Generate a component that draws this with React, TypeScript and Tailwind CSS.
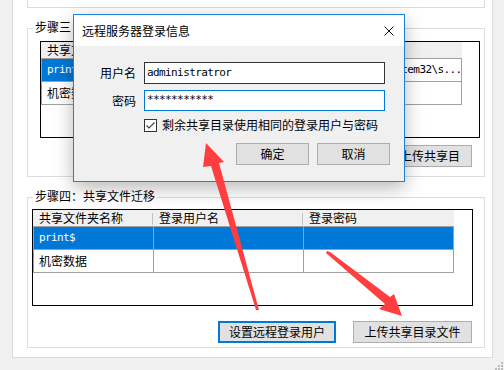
const cjk = "font-['Noto_Sans_CJK_SC','Noto_Sans',sans-serif]";
const mono = "font-['DejaVu_Sans_Mono','Liberation_Mono',monospace] text-[11px] tracking-[-0.6px]";

type Cell = { text: string; mono?: boolean; selected?: boolean };

function GroupBox({ title, className, children }: { title: string; className: string; children: React.ReactNode }) {
  return (
    <div className={`relative w-[458px] border border-[#dcdcdc] ${className}`}>
      <span className="absolute -top-[10px] left-[5px] bg-white px-[2px] text-[12px] leading-[16px]">{title}</span>
      {children}
    </div>
  );
}

function ListView({ header, rows, width }: { header: string[]; rows: Cell[][]; width: string }) {
  const widths = ['w-[120px]', 'w-[150px]', 'w-[150px]'];
  return (
    <div className={`${width} h-[97px] border border-black bg-white`}>
      <div className="flex h-[17px] w-[421px] border-b border-[#a0a0a0] bg-[#f0f0f0]">
        {header.map((h, i) => (
          <div key={i} className={`${widths[i]} relative flex items-center pl-[6px] text-[12px] leading-[16px]`}>
            {h}
            {i < 2 && <span className="absolute right-0 top-[3px] h-[12px] w-px bg-[#c4c4c4]" />}
          </div>
        ))}
      </div>
      {rows.map((row, r) => (
        <div key={r} className="flex h-[23px] w-[421px] border-b border-l border-[#a0a0a0]">
          {row.map((c, i) => (
            <div
              key={i}
              className={`${widths[i]} flex items-center overflow-hidden whitespace-nowrap border-r border-[#a0a0a0] pl-[5px] ${
                c.selected ? 'bg-[#0078d7] text-white' : ''
              } ${c.mono ? mono : 'text-[12px]'}`}
            >
              {c.text}
            </div>
          ))}
        </div>
      ))}
    </div>
  );
}

function Button({ children, focused, className = '' }: { children: React.ReactNode; focused?: boolean; className?: string }) {
  return (
    <div
      className={`flex h-[22px] items-center justify-center bg-[#e1e1e1] text-[12px] ${
        focused ? 'border-2 border-[#0078d7]' : 'border border-[#adadad]'
      } ${className}`}
    >
      {children}
    </div>
  );
}

function LoginDialog() {
  return (
    <div className="absolute left-[73px] top-[14px] flex h-[168px] w-[332px] flex-col border border-[#1883d7] bg-[#f0f0f0] shadow-[0_6px_18px_rgba(0,0,0,0.28)]">
      <div className="flex h-[31px] items-center justify-between bg-white pl-[8px] pr-[10px]">
        <span className="text-[12px]">远程服务器登录信息</span>
        <svg width="10" height="10" viewBox="0 0 10 10">
          <path d="M0.5 0.5 L9.5 9.5 M9.5 0.5 L0.5 9.5" stroke="#111" strokeWidth="1" />
        </svg>
      </div>
      <div className="flex flex-col pt-[16px]">
        <div className="flex items-center">
          <span className="w-[62px] text-right text-[12px]">用户名</span>
          <div className={`ml-[8px] flex h-[22px] w-[241px] items-center border border-[#333] bg-white pl-[2px] ${mono}`}>
            administratror
          </div>
        </div>
        <div className="mt-[6px] flex items-center">
          <span className="w-[62px] text-right text-[12px]">密码</span>
          <div className={`ml-[8px] flex h-[21px] w-[241px] items-center border border-[#0078d7] bg-white pl-[2px] ${mono}`}>
            ***********
          </div>
        </div>
        <div className="mt-[7px] flex items-center pl-[70px]">
          <div className="h-[13px] w-[13px] border border-[#333] bg-white">
            <svg width="11" height="11" viewBox="0 0 11 11">
              <path d="M1.5 5.5 L4 8 L9.5 2.5" fill="none" stroke="#444" strokeWidth="1.2" />
            </svg>
          </div>
          <span className="ml-[5px] text-[12px] leading-[14px]">剩余共享目录使用相同的登录用户与密码</span>
        </div>
        <div className="mt-[11px] flex justify-end gap-[8px] pr-[14px]">
          <Button className="w-[73px]">确定</Button>
          <Button className="w-[73px]">取消</Button>
        </div>
      </div>
    </div>
  );
}

function Arrows() {
  return (
    <svg className="pointer-events-none absolute left-0 top-0" width="504" height="370">
      <polygon
        points="206,143 224,162 219,163 259,310 256,310 211,166 203,167"
        fill="#ff3f3f"
      />
      <polygon
        points="327,251 330,252 390,297 394,294 402,316 379,309 385,304 326,253"
        fill="#ff3f3f"
      />
    </svg>
  );
}

function ResizeGrip() {
  const dots = [
    [501, 363],
    [498, 366],
    [501, 366],
    [495, 369],
    [498, 369],
    [501, 369],
  ];
  return (
    <svg className="absolute left-0 top-0" width="504" height="370">
      {dots.map(([x, y], i) => (
        <rect key={i} x={x} y={y - 1} width="2" height="2" fill="#bcbcbc" />
      ))}
    </svg>
  );
}

export default function App() {
  return (
    <div className={`relative h-[370px] w-[504px] overflow-hidden bg-[#f0f0f0] text-black ${cjk}`}>
      <div className="ml-[12px] h-[358px] w-[481px] border-x border-b border-[#dcdcdc] bg-white pl-[14px]">
        <div className="h-[8px] w-[458px] border-x border-b border-[#dcdcdc]" />

        <GroupBox title="步骤三" className="mt-[20px] h-[149px] pl-[12px] pt-[12px]">
          <ListView
            width="w-[440px]"
            header={['共享文件夹名称', '', '']}
            rows={[
              [
                { text: 'print$', mono: true, selected: true },
                { text: '' },
                { text: 'C:\\Windows\\system32\\s...', mono: true },
              ],
              [{ text: '机密数据' }, { text: '' }, { text: '' }],
            ]}
          />
          <div className="mt-[7px] flex justify-end pr-[12px]">
            <Button className="w-[132px] !justify-end pr-[11px]">上传共享目</Button>
          </div>
        </GroupBox>

        <GroupBox title="步骤四：共享文件迁移" className="mt-[20px] h-[151px] pl-[4px] pt-[11px]">
          <ListView
            width="w-[441px]"
            header={['共享文件夹名称', '登录用户名', '登录密码']}
            rows={[
              [
                { text: 'print$', mono: true, selected: true },
                { text: '', selected: true },
                { text: '', selected: true },
              ],
              [{ text: '机密数据' }, { text: '' }, { text: '' }],
            ]}
          />
          <div className="mt-[15px] flex justify-end gap-[17px] pr-[12px]">
            <Button focused className="w-[118px]">设置远程登录用户</Button>
            <Button className="w-[119px]">上传共享目录文件</Button>
          </div>
        </GroupBox>
      </div>

      <ResizeGrip />
      <LoginDialog />
      <Arrows />
    </div>
  );
}
